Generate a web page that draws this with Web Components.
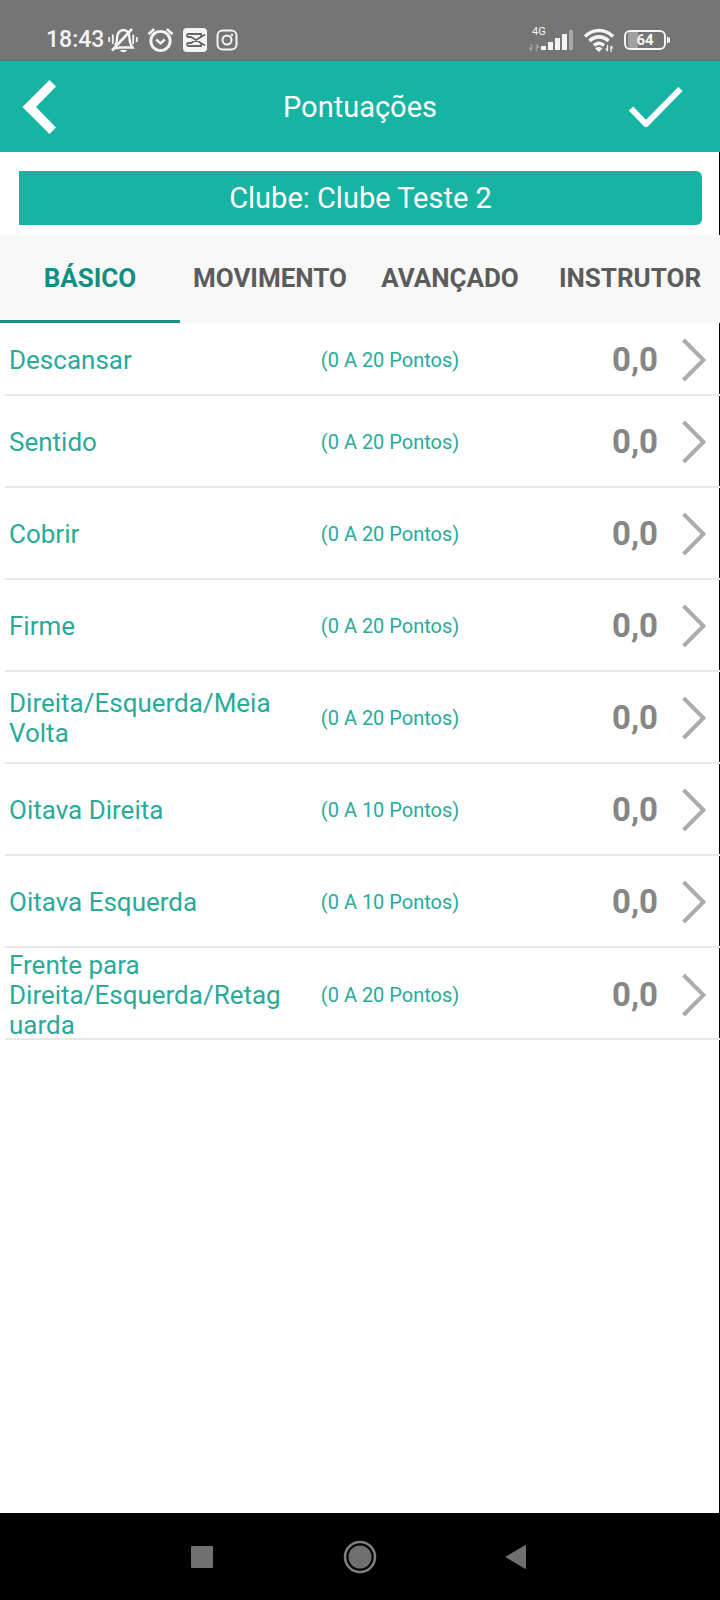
<!DOCTYPE html>
<html lang="pt-BR">
<head>
<meta charset="utf-8">
<meta name="viewport" content="width=device-width, initial-scale=1">
<title>Pontuações</title>
<style>
  body { margin: 0; background: #fff; font-family: Roboto, "Liberation Sans", sans-serif; }
</style>
</head>
<body>
<score-app></score-app>

<script>
const define = (name, html, setup) => {
  const template = document.createElement('template');
  template.innerHTML = html;
  customElements.define(name, class extends HTMLElement {
    constructor() {
      super();
      this.attachShadow({ mode: 'open' }).append(template.content.cloneNode(true));
    }
    connectedCallback() { if (setup) setup(this, this.shadowRoot); }
  });
};

define('status-bar', `
  <style>
    :host { display: flex; justify-content: space-between; align-items: center; box-sizing: border-box;
      height: 61px; padding: 20px 50px 0 46px; background: #757575; border-bottom: 1px solid #4f7370; color: #f4f4f4; }
    .group { display: flex; align-items: center; gap: 9px; }
    .time { font-size: 23px; line-height: 28px; font-weight: 500; margin-right: -5px; }
    svg { display: block; }
    .signal { display: grid; grid-template-columns: 46px; }
    .net { font-size: 11px; line-height: 10px; padding-left: 4px; grid-area: 1 / 1; }
    .signal svg { grid-area: 1 / 1; }
    .battery { display: flex; align-items: center; gap: 1px; }
    .cell { box-sizing: border-box; width: 42px; height: 20px; border: 2px solid #f4f4f4; border-radius: 6px;
      font-size: 15px; line-height: 16px; font-weight: 700; text-align: center;
      background: linear-gradient(90deg, #a0a0a0 30%, #757575 30%) content-box; padding: 0 2px; }
    .nub { width: 3px; height: 6px; background: #f4f4f4; border-radius: 0 2px 2px 0; }
  </style>
  <div class="group">
    <span class="time">18:43</span>
    <svg width="30" height="26" viewBox="0 0 30 26" fill="none" stroke="#f4f4f4" stroke-width="2.400">
      <path d="M7 18.500c2-2 2-4 2-7.500 0-5 3-8 6.500-8s6 3 6 8c0 4 .5 6 3 9.500H11M6 21h5"/>
      <path d="M4 23.500 24 2" stroke-width="2.600"/>
      <path d="M12 23h7c-1 3-6 3-7 0z" fill="#f4f4f4" stroke="none"/>
      <path d="M1.200 10v5M4.800 7.500V17M25.200 7.500V17M28.800 10v5" stroke-width="1.800"/>
    </svg>
    <svg width="27" height="26" viewBox="0 0 28 26" fill="none" stroke="#f4f4f4">
      <circle cx="14" cy="14" r="10" stroke-width="3"/>
      <path d="m9.500 12.500 4.500 4 4.500-4" stroke-width="2.600"/>
      <path d="M1.500 7 7.500 1.500M26.500 7l-6-5.500" stroke-width="2.800"/>
    </svg>
    <svg width="24" height="24" viewBox="0 0 24 24">
      <rect width="24" height="24" rx="4" fill="#f4f4f4"/>
      <path d="M22 6.500 8 15H5.500c-2 0-2 3 0 3H18v-2.500M22 17.500 8 9H5.500c-2 0-2-3 0-3H18v2.500" fill="none" stroke="#686868" stroke-width="1.800"/>
    </svg>
    <svg width="22" height="22" viewBox="0 0 22 22" fill="none" stroke="#f4f4f4" stroke-width="2">
      <rect x="1.500" y="1.500" width="19" height="19" rx="5"/>
      <circle cx="11" cy="11" r="4.500"/>
      <circle cx="16" cy="6" r="1.200" fill="#f4f4f4" stroke="none"/>
    </svg>
  </div>
  <div class="group">
    <div class="signal">
      <span class="net">4G</span>
      <svg width="46" height="26" viewBox="0 0 46 26">
        <path d="M3.500 17v6M8.500 24v-6" stroke="#a0a0a0" stroke-width="1.600"/>
        <path d="M0 20.500h3.500V25zM8.500 16.500v4.500H12z" fill="#a0a0a0"/>
        <path d="M13 19h5v4h-5zM20 15h5v8h-5zM27 11h5v12h-5zM34 7h5v16h-5z" fill="#f4f4f4"/>
        <path d="M41 3h4v20h-4z" fill="#a8a8a8"/>
      </svg>
    </div>
    <svg width="32" height="26" viewBox="0 0 32 26" fill="none" stroke="#f4f4f4" stroke-width="3.600">
      <path d="M2 9.500C10 1.500 22 1.500 30 9.500M6.500 14c5.500-5.500 13.500-5.500 19 0M11 18.500c3-3 7-3 10 0"/>
      <path d="m12 21.500 4 3.500 3.500-3.500c-2-2-5.500-2-7.500 0z" fill="#f4f4f4" stroke="none"/>
      <path d="M24.500 18v6M28 25v-6" stroke-width="1.300"/>
      <path d="M22 21.500h2.500V25zM28 18v3.500h2.500z" fill="#f4f4f4" stroke="none"/>
    </svg>
    <div class="battery"><div class="cell">64</div><div class="nub"></div></div>
  </div>
`);

define('app-header', `
  <style>
    :host { display: grid; grid-template-columns: 80px 1fr 80px; align-items: center; height: 91px;
      background: #17b3a3; color: #fff; }
    h1 { margin: 0; font-size: 29px; line-height: 36px; font-weight: 400; text-align: center; }
    button { border: 0; padding: 0; background: none; display: flex; align-items: center; height: 80px; cursor: pointer; }
    .back { padding-left: 22px; }
    .confirm { justify-content: flex-end; padding-right: 37px; }
    svg { display: block; flex: none; }
  </style>
  <button class="back" aria-label="Voltar">
    <svg width="34" height="54" viewBox="0 0 34 54"><path d="M27.500 0 34 6.500 14 27l20 20.500-6.500 6.500L.5 27z" fill="#fff"/></svg>
  </button>
  <h1><slot></slot></h1>
  <button class="confirm" aria-label="Confirmar">
    <svg width="54" height="40" viewBox="0 0 54 40"><path d="M2 21.500 17 37 51.500 2" fill="none" stroke="#fff" stroke-width="6"/></svg>
  </button>
`);

define('club-banner', `
  <style>
    :host { display: block; padding: 19px 17px 10px 19px; border-right: 1px solid #000; }
    div { background: #17b3a3; color: #fff; border-radius: 0 6px 6px 0; font-size: 29px; line-height: 54px; text-align: center; }
  </style>
  <div><slot></slot></div>
`);

define('tab-bar', `
  <style>
    :host { display: grid; grid-template-columns: repeat(4, 1fr); background: #f8f8f8; }
  </style>
  <slot></slot>
`, host => host.setAttribute('role', 'tablist'));

define('tab-item', `
  <style>
    :host { display: block; }
    button { box-sizing: border-box; width: 100%; height: 88px; border: solid transparent; border-width: 1px 0 3px;
      padding: 0; background: none; color: #5c5c5c; font: 700 26px/30px Roboto, "Liberation Sans", sans-serif;
      white-space: nowrap; cursor: pointer; }
    :host([selected]) button { color: #0f8f83; border-bottom-color: #149384; }
  </style>
  <button role="tab"><slot></slot></button>
`, (host, root) => root.querySelector('button').setAttribute('aria-selected', host.hasAttribute('selected')));

define('score-list', `
  <style>
    :host { display: block; flex: 1; background: linear-gradient(#000, #000) right / 1px 100% no-repeat; }
    :host ::slotted(score-row:first-child) { --row-height: 73px; }
  </style>
  <slot></slot>
`, host => host.setAttribute('role', 'list'));

define('score-row', `
  <style>
    :host { display: block; padding-left: 5px; }
    button { box-sizing: border-box; width: 100%; height: var(--row-height, 92px); display: grid;
      grid-template-columns: 39% 1fr auto auto; align-items: center; padding: 2px 14px 0 4px;
      border: 0; border-bottom: 2px solid #e8e8e8; background: none; color: #2aaa98;
      font: 400 26px/30px Roboto, "Liberation Sans", sans-serif; text-align: left; cursor: pointer; }
    .name { overflow-wrap: anywhere; margin-right: -8px; }
    .range { font-size: 20px; padding-left: 40px; }
    .value { font-size: 33px; line-height: 40px; font-weight: 700; color: #868686; padding-right: 24px; }
    svg { display: block; }
  </style>
  <button>
    <span class="name"><slot></slot></span>
    <span class="range"></span>
    <span class="value"></span>
    <svg width="24" height="44" viewBox="0 0 24 44"><path d="M1.500 2 21.500 22 1.500 42" fill="none" stroke="#acacac" stroke-width="4"/></svg>
  </button>
`, (host, root) => {
  host.setAttribute('role', 'listitem');
  root.querySelector('.range').textContent = `(0 A ${host.getAttribute('max')} Pontos)`;
  root.querySelector('.value').textContent = host.getAttribute('value');
});

define('nav-bar', `
  <style>
    :host { display: flex; justify-content: center; align-items: center; gap: 108px; height: 87px; background: #000; }
    button { border: 0; padding: 0; width: 50px; height: 50px; background: none; display: grid; place-items: center; cursor: pointer; }
    svg { display: block; }
  </style>
  <button aria-label="Recentes"><svg width="22" height="22"><rect width="22" height="22" rx="1" fill="#707070"/></svg></button>
  <button aria-label="Início"><svg width="34" height="34" viewBox="0 0 34 34"><circle cx="17" cy="17" r="15" fill="none" stroke="#808080" stroke-width="2.500"/><circle cx="17" cy="17" r="11.500" fill="#707070"/></svg></button>
  <button aria-label="Voltar"><svg width="26" height="26" viewBox="0 0 26 26"><path d="M1 13 20.500 1.500v23z" fill="#707070" stroke="#707070" stroke-linejoin="round"/></svg></button>
`);

define('score-app', `
  <style>
    :host { display: flex; flex-direction: column; min-height: 100vh; }
  </style>
  <status-bar></status-bar>
  <app-header>Pontuações</app-header>
  <club-banner>Clube: Clube Teste 2</club-banner>
  <tab-bar>
    <tab-item selected>BÁSICO</tab-item>
    <tab-item>MOVIMENTO</tab-item>
    <tab-item>AVANÇADO</tab-item>
    <tab-item>INSTRUTOR</tab-item>
  </tab-bar>
  <score-list>
    <score-row max="20" value="0,0">Descansar</score-row>
    <score-row max="20" value="0,0">Sentido</score-row>
    <score-row max="20" value="0,0">Cobrir</score-row>
    <score-row max="20" value="0,0">Firme</score-row>
    <score-row max="20" value="0,0">Direita/Esquerda/Meia Volta</score-row>
    <score-row max="10" value="0,0">Oitava Direita</score-row>
    <score-row max="10" value="0,0">Oitava Esquerda</score-row>
    <score-row max="20" value="0,0">Frente para Direita/Esquerda/Retaguarda</score-row>
  </score-list>
  <nav-bar></nav-bar>
`);
</script>
</body>
</html>
